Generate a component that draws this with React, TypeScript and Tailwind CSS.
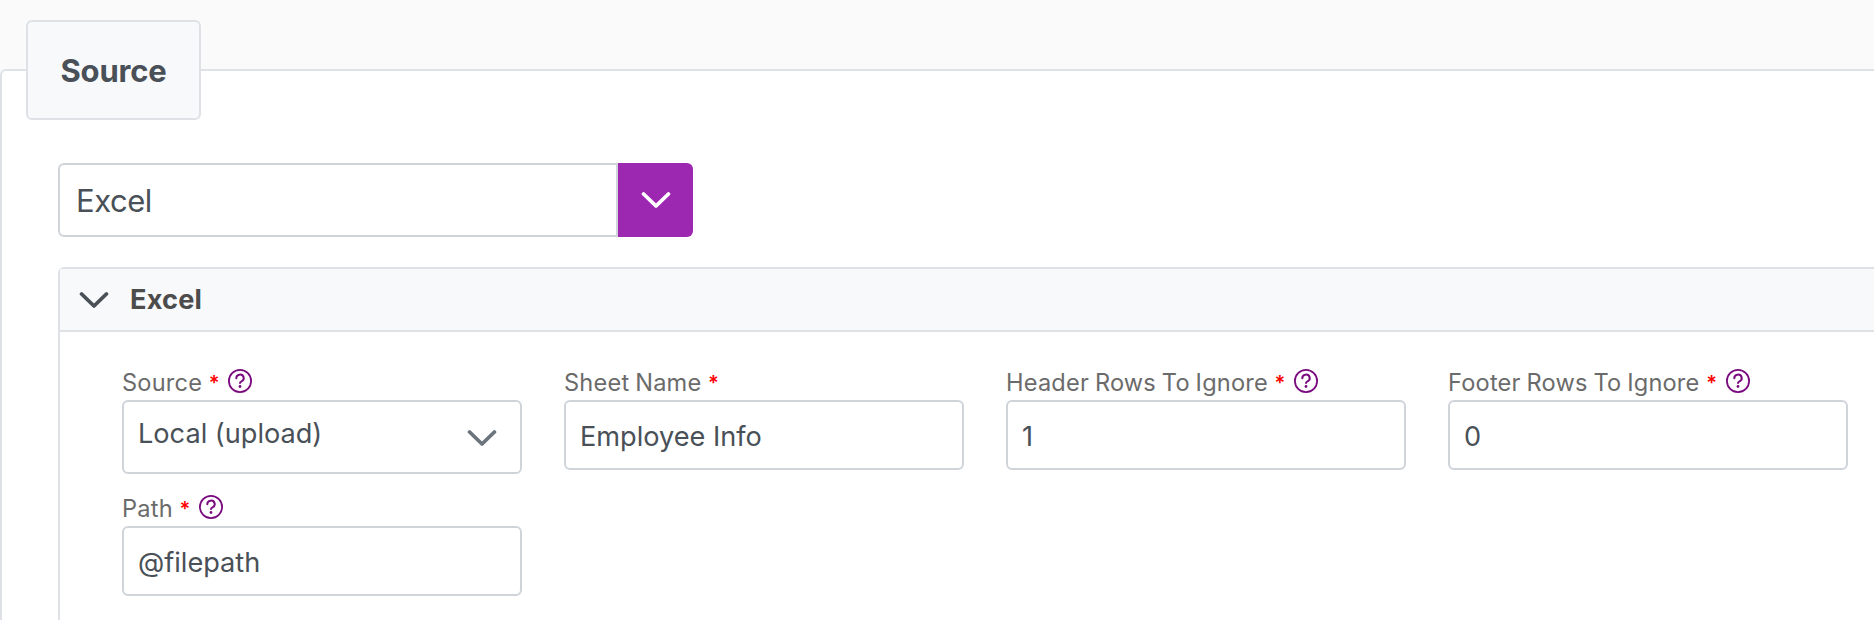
import { ReactNode } from "react";

function Chevron({ className }: { className: string }) {
  return (
    <svg className={`shrink-0 ${className}`} width="30" height="18" viewBox="0 0 30 18" fill="none" stroke="currentColor" strokeWidth="3.8" strokeLinecap="round" strokeLinejoin="round">
      <path d="M2.6 3 15 15 27.4 3" />
    </svg>
  );
}

function Help() {
  return (
    <svg className="ml-[9px] mb-[5px] shrink-0 text-[#7a0b7f]" width="24" height="24" viewBox="0 0 24 24" fill="none" stroke="currentColor" strokeWidth="1.8" strokeLinecap="round">
      <circle cx="12" cy="12" r="11.1" />
      <path d="M8.3 9.2a3.7 3.5 0 1 1 5.2 3.1c-1.1.5-1.5.9-1.5 1.8" strokeWidth="2" />
      <circle cx="12" cy="17.5" r="1.4" fill="currentColor" stroke="none" />
    </svg>
  );
}

function Field({ label, help, children }: { label: string; help?: boolean; children: ReactNode }) {
  return (
    <div className="w-[400px]">
      <div className="flex h-[34px] items-center text-[23.6px] leading-[34px] text-[#6b6b6b]">
        <span className="whitespace-nowrap tracking-[0.2px] [word-spacing:-1px]">{label}</span>
        <span className="ml-[7px] flex w-[10px] justify-center text-[20px] font-semibold text-[#ff0000]">*</span>
        {help && <Help />}
      </div>
      {children}
    </div>
  );
}

function Input({ value }: { value: string }) {
  return (
    <div className="flex h-[70px] items-center rounded-[6px] border-2 border-[#ced4da] bg-white pl-[14px] pt-[3px] text-[27.15px] leading-[34px] text-[#495057]">
      {value}
    </div>
  );
}

export default function App() {
  return (
    <div className="h-[620px] w-[1874px] overflow-hidden bg-[#fafafa] pt-[69px] font-['Inter',sans-serif]">
      <div className="h-[560px] w-[1900px] rounded-tl-[6px] border-2 border-[#dee2e6] bg-white pl-[24px]">
        <div className="-mt-[51px] flex h-[100px] w-[175px] items-center justify-center rounded-[6px] border-2 border-[#dee2e6] bg-[#f8f9fa] pt-[2px] text-[31px] font-bold tracking-[-0.2px] text-[#495057]">
          Source
        </div>
        <div className="pl-[32px] pt-[43px]">
          <div className="flex h-[74px] w-[635px]">
            <div className="flex flex-1 items-center rounded-l-[6px] border-2 border-[#ced4da] pl-[16px] pt-[2px] text-[31px] tracking-[-0.45px] text-[#495057]">
              Excel
            </div>
            <div className="flex w-[75px] items-center justify-center rounded-r-[6px] bg-[#9c27b0] text-white">
              <Chevron className="" />
            </div>
          </div>
          <div className="mt-[30px] h-[400px] w-[1860px] rounded-t-[6px] border-2 border-[#dee2e6]">
            <div className="flex h-[63px] items-center border-b-2 border-[#dee2e6] bg-[#f8f9fa] pl-[19px]">
              <Chevron className="text-[#495057]" />
              <span className="ml-[21px] pt-[2px] text-[27.15px] font-bold tracking-[0.2px] text-[#4c4c4c]">Excel</span>
            </div>
            <div className="flex flex-wrap gap-x-[42px] gap-y-[18px] pl-[62px] pt-[34px]">
              <Field label="Source" help>
                <div className="flex h-[74px] items-center justify-between rounded-[6px] border-2 border-[#ced4da] bg-white pl-[14px] pr-[23px] text-[27.15px] text-[#495057]">
                  <span className="pb-[6px]">Local (upload)</span>
                  <Chevron className="mt-[1px] text-[#6c757d]" />
                </div>
              </Field>
              <Field label="Sheet Name"><Input value="Employee Info" /></Field>
              <Field label="Header Rows To Ignore" help><Input value="1" /></Field>
              <Field label="Footer Rows To Ignore" help><Input value="0" /></Field>
              <Field label="Path" help><Input value="@filepath" /></Field>
            </div>
          </div>
        </div>
      </div>
    </div>
  );
}
